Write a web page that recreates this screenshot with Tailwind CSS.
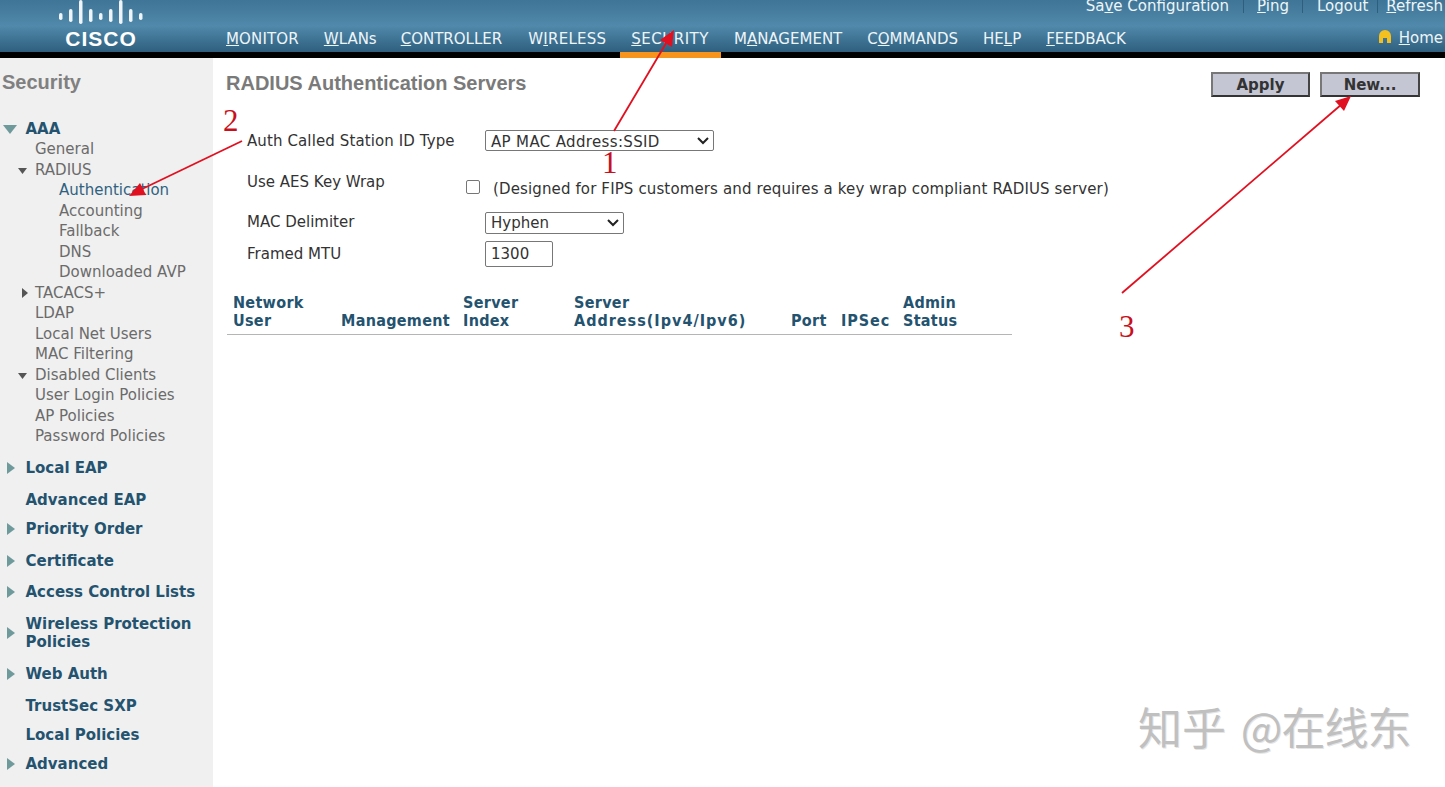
<!DOCTYPE html>
<html lang="en">
<head>
    <meta charset="UTF-8">
    <title>RADIUS Authentication Servers</title>
    <script src="https://cdn.jsdelivr.net/npm/@tailwindcss/browser@4"></script>
</head>
<body class="bg-white font-['DejaVu_Sans',sans-serif] overflow-hidden">
<div class="relative w-[1445px] h-[787px] overflow-hidden">
    <!-- top bar -->
    <header class="h-[58px] border-b-[6px] border-black bg-gradient-to-b from-[#3f7596] via-[#5089ab] to-[#2f5f7e] flex relative text-[#eef5f9]">
        <div class="w-[226px] shrink-0 flex flex-col items-center pr-[24px]">
            <svg width="84" height="24" viewBox="0 0 84 24" fill="#eef4f7">
                <rect x="0" y="13" width="3.500" height="7" rx="1.700"/>
                <rect x="10" y="9" width="3.500" height="13" rx="1.700"/>
                <rect x="20" y="0" width="3.500" height="24" rx="1.700"/>
                <rect x="30" y="9" width="3.500" height="13" rx="1.700"/>
                <rect x="40" y="13" width="3.500" height="7" rx="1.700"/>
                <rect x="50" y="9" width="3.500" height="13" rx="1.700"/>
                <rect x="60" y="0" width="3.500" height="24" rx="1.700"/>
                <rect x="70" y="9" width="3.500" height="13" rx="1.700"/>
                <rect x="80" y="13" width="3.500" height="7" rx="1.700"/>
            </svg>
            <span class="text-[21px] leading-[20px] font-bold tracking-[1px] text-white mt-[5px] font-['Liberation_Sans',sans-serif]">CISCO</span>
        </div>
        <nav class="flex items-end text-[15px] leading-[18px] pb-[4px] flex-1">
            <a class="mr-[25px] tracking-[0.15px]"><u>M</u>ONITOR</a>
            <a class="mr-[24px]"><u>W</u>LANs</a>
            <a class="mr-[26px]"><u>C</u>ONTROLLER</a>
            <a class="mr-[25px] tracking-[0.25px]">W<u>I</u>RELESS</a>
            <a class="mr-[25px] tracking-[0.5px]"><u>S</u>ECURITY</a>
            <a class="mr-[25px]">M<u>A</u>NAGEMENT</a>
            <a class="mr-[25px]">C<u>O</u>MMANDS</a>
            <a class="mr-[25px]">HE<u>L</u>P</a>
            <a><u>F</u>EEDBACK</a>
        </nav>
        <div class="absolute top-[-3px] right-[2px] flex text-[15px] leading-[18px] items-center">
            <a>Sa<u>v</u>e Configuration</a>
            <span class="w-px h-[14px] bg-[#2f5f7e] ml-[14px] mr-[13px]"></span>
            <a><u>P</u>ing</a>
            <span class="w-px h-[14px] bg-[#2f5f7e] ml-[13px] mr-[14px]"></span>
            <a>Logout</a>
            <span class="w-px h-[14px] bg-[#2f5f7e] ml-[9px] mr-[8px]"></span>
            <a><u>R</u>efresh</a>
        </div>
        <div class="absolute top-[29px] right-[2px] flex items-center text-[15px] leading-[18px]">
            <svg width="14" height="15" viewBox="0 0 14 15" class="mr-[7px] mb-[3px]"><path d="M1 14V7a6 6 0 0 1 12 0v7H9V9H5v5z" fill="#f4c020"/></svg>
            <a><u>H</u>ome</a>
        </div>
        <!-- active tab marker -->
        <div class="absolute left-[620px] top-[52px] w-[101px] h-[6px] bg-[#f7941d]"></div>
    </header>

    <div class="flex h-[729px]">
        <!-- left menu -->
        <aside class="w-[213px] shrink-0 bg-[#f0f0f0] text-[15px] leading-[20.5px] text-[#6b6b6b]">
            <h2 class="font-['Liberation_Sans',sans-serif] font-bold text-[20px] leading-[24px] text-[#808080] pl-[2px] mt-[12px] mb-[24px]">Security</h2>
            <div class="pl-[25.5px] font-bold text-[#24536f] relative h-[21.4px] leading-[22px]">
                <svg class="absolute left-[3px] top-[7px]" width="14" height="9" viewBox="0 0 14 9"><path d="M0 0h14L7 9z" fill="#6f9a9c"/></svg>AAA
            </div>
            <div class="pl-[35px]">General</div>
            <div class="pl-[35px] relative">
                <svg class="absolute left-[18px] top-[8px]" width="9" height="6" viewBox="0 0 9 6"><path d="M0 0h9L4.500 6z" fill="#555"/></svg>RADIUS
            </div>
            <div class="pl-[59px] text-[#2f6280]">Authentication</div>
            <div class="pl-[59px]">Accounting</div>
            <div class="pl-[59px]">Fallback</div>
            <div class="pl-[59px]">DNS</div>
            <div class="pl-[59px]">Downloaded AVP</div>
            <div class="pl-[35px] relative">
                <svg class="absolute left-[22px] top-[5px]" width="6" height="10" viewBox="0 0 6 10"><path d="M0 0l6 5-6 5z" fill="#555"/></svg>TACACS+
            </div>
            <div class="pl-[35px]">LDAP</div>
            <div class="pl-[35px]">Local Net Users</div>
            <div class="pl-[35px]">MAC Filtering</div>
            <div class="pl-[35px] relative">
                <svg class="absolute left-[18px] top-[8px]" width="9" height="6" viewBox="0 0 9 6"><path d="M0 0h9L4.500 6z" fill="#555"/></svg>Disabled Clients
            </div>
            <div class="pl-[35px]">User Login Policies</div>
            <div class="pl-[35px]">AP Policies</div>
            <div class="pl-[35px]">Password Policies</div>

            <div class="font-bold text-[#24536f] leading-[18px]">
                <div class="pl-[25.5px] relative mt-[12px]"><svg class="absolute left-[7px] top-[3px]" width="8" height="12" viewBox="0 0 8 12"><path d="M0 0l8 6-8 6z" fill="#6f9a9c"/></svg>Local EAP</div>
                <div class="pl-[25.5px] mt-[14px]">Advanced EAP</div>
                <div class="pl-[25.5px] relative mt-[11px]"><svg class="absolute left-[7px] top-[3px]" width="8" height="12" viewBox="0 0 8 12"><path d="M0 0l8 6-8 6z" fill="#6f9a9c"/></svg>Priority Order</div>
                <div class="pl-[25.5px] relative mt-[14px]"><svg class="absolute left-[7px] top-[3px]" width="8" height="12" viewBox="0 0 8 12"><path d="M0 0l8 6-8 6z" fill="#6f9a9c"/></svg>Certificate</div>
                <div class="pl-[25.5px] relative mt-[13px]"><svg class="absolute left-[7px] top-[3px]" width="8" height="12" viewBox="0 0 8 12"><path d="M0 0l8 6-8 6z" fill="#6f9a9c"/></svg>Access Control Lists</div>
                <div class="pl-[25.5px] relative mt-[14px]"><svg class="absolute left-[7px] top-[12px]" width="8" height="12" viewBox="0 0 8 12"><path d="M0 0l8 6-8 6z" fill="#6f9a9c"/></svg>Wireless Protection<br>Policies</div>
                <div class="pl-[25.5px] relative mt-[14px]"><svg class="absolute left-[7px] top-[3px]" width="8" height="12" viewBox="0 0 8 12"><path d="M0 0l8 6-8 6z" fill="#6f9a9c"/></svg>Web Auth</div>
                <div class="pl-[25.5px] mt-[14px]">TrustSec SXP</div>
                <div class="pl-[25.5px] mt-[11px]">Local Policies</div>
                <div class="pl-[25.5px] relative mt-[11px]"><svg class="absolute left-[7px] top-[3px]" width="8" height="12" viewBox="0 0 8 12"><path d="M0 0l8 6-8 6z" fill="#6f9a9c"/></svg>Advanced</div>
            </div>
        </aside>

        <!-- content -->
        <main class="flex-1 pl-[13px] relative">
            <div class="flex justify-between items-start pt-[13px] pr-[25px]">
                <h1 class="font-['Liberation_Sans',sans-serif] font-bold text-[20px] leading-[24px] text-[#7a7a7a]">RADIUS Authentication Servers</h1>
                <div class="flex gap-[10px] mt-[1px]">
                    <button class="w-[99px] h-[25px] pt-[1px] bg-[#c4c6d3] border-2 border-t-[#777] border-l-[#777] border-r-[#444] border-b-[#333] font-bold text-[15px] leading-[20px] text-[#333]">Apply</button>
                    <button class="w-[100px] h-[25px] pt-[1px] bg-[#c4c6d3] border-2 border-t-[#777] border-l-[#777] border-r-[#444] border-b-[#333] font-bold text-[15px] leading-[20px] text-[#333]">New...</button>
                </div>
            </div>

            <div class="text-[15px] leading-[18px] text-[#333] pl-[21px]">
                <div class="flex items-center mt-[33px] h-[21px]">
                    <label class="w-[238px] tracking-[0.11px]">Auth Called Station ID Type</label>
                    <div class="w-[229px] h-[21px] border border-[#777] rounded-[2px] flex items-center justify-between pl-[5px] pr-[3px]">
                        <span class="tracking-[0.35px] pt-[2px]">AP MAC Address:SSID</span>
                        <svg width="14" height="8" viewBox="0 0 14 8" fill="none" stroke="#222" stroke-width="2"><path d="M2 1l5 5 5-5"/></svg>
                    </div>
                </div>
                <div class="flex mt-[22px]">
                    <label class="w-[219px] leading-[18px]">Use AES Key Wrap</label>
                    <div class="w-[14px] h-[14px] mt-[7px] border border-[#767676] rounded-[2px] bg-white shrink-0"></div>
                    <span class="ml-[13px] mt-[7px] whitespace-nowrap tracking-[0.13px]">(Designed for FIPS customers and requires a key wrap compliant RADIUS server)</span>
                </div>
                <div class="flex items-center mt-[14px] h-[22px]">
                    <label class="w-[238px] mb-[2px]">MAC Delimiter</label>
                    <div class="w-[139px] h-[22px] border border-[#777] rounded-[2px] flex items-center justify-between pl-[5px] pr-[3px]">
                        <span>Hyphen</span>
                        <svg width="14" height="8" viewBox="0 0 14 8" fill="none" stroke="#222" stroke-width="2"><path d="M2 1l5 5 5-5"/></svg>
                    </div>
                </div>
                <div class="flex items-center mt-[7px] h-[26px]">
                    <label class="w-[238px]">Framed MTU</label>
                    <div class="w-[68px] h-[26px] border border-[#777] rounded-[2px] flex items-center pl-[5px]">1300</div>
                </div>
            </div>

            <table class="mt-[27px] ml-[1px] w-[785px] table-fixed border-separate border-spacing-0 text-[16px] leading-[18px] tracking-[0.3px] font-bold text-[#24536f] font-['DejaVu_Sans_Condensed','DejaVu_Sans',sans-serif] [font-stretch:condensed]">
                <thead>
                    <tr class="align-bottom text-left">
                        <th class="w-[107px] pl-[6px] pb-[4px] border-b border-[#b5b5b5]">Network<br>User</th>
                        <th class="w-[123px] pl-[7px] pb-[4px] border-b border-[#b5b5b5]">Management</th>
                        <th class="w-[97px] pl-[6px] pb-[4px] border-b border-[#b5b5b5]">Server<br>Index</th>
                        <th class="w-[14px] border-b border-[#b5b5b5]"></th>
                        <th class="w-[218px] pl-[6px] pb-[4px] border-b border-[#b5b5b5]">Server<br><span class="tracking-[1px]">Address(Ipv4/Ipv6)</span></th>
                        <th class="w-[49px] pl-[5px] pb-[4px] border-b border-[#b5b5b5]">Port</th>
                        <th class="w-[62px] pl-[6px] pb-[4px] border-b border-[#b5b5b5] tracking-[0.9px]">IPSec</th>
                        <th class="w-[100px] pl-[6px] pb-[4px] border-b border-[#b5b5b5]">Admin<br>Status</th>
                        <th class="border-b border-[#b5b5b5]"></th>
                    </tr>
                </thead>
            </table>
        </main>
    </div>

    <!-- annotations drawn over the screenshot -->
    <svg class="absolute inset-0 pointer-events-none" width="1445" height="787" viewBox="0 0 1445 787">
        <g stroke="#e01020" stroke-width="1.800" fill="#e01020">
            <line x1="614" y1="131" x2="668" y2="40"/>
            <path d="M674 30l-2 17-12-7z" stroke="none"/>
            <line x1="242" y1="141" x2="140" y2="190"/>
            <path d="M129 196l11-13 6 12z" stroke="none"/>
            <line x1="1122" y1="293" x2="1342" y2="104"/>
            <path d="M1351 96l-7 15-9-10z" stroke="none"/>
        </g>
    </svg>
    <span class="absolute left-[602px] top-[149px] text-[31px] leading-[28px] text-[#c8101c] font-['Liberation_Serif',serif]">1</span>
    <span class="absolute left-[223px] top-[104px] text-[31px] leading-[34px] text-[#c8101c] font-['Liberation_Serif',serif]">2</span>
    <span class="absolute left-[1119px] top-[310px] text-[31px] leading-[34px] text-[#c8101c] font-['Liberation_Serif',serif]">3</span>
    <span class="absolute left-[1138px] top-[701px] text-[44px] leading-[50px] text-[#c0c0c0] font-['Noto_Sans_CJK_SC',sans-serif] [text-shadow:1px_1px_0_#e4e4e4] [word-spacing:5px] whitespace-nowrap">知乎 <span class="tracking-[-1px]">@在线东</span></span>
</div>
</body>
</html>
